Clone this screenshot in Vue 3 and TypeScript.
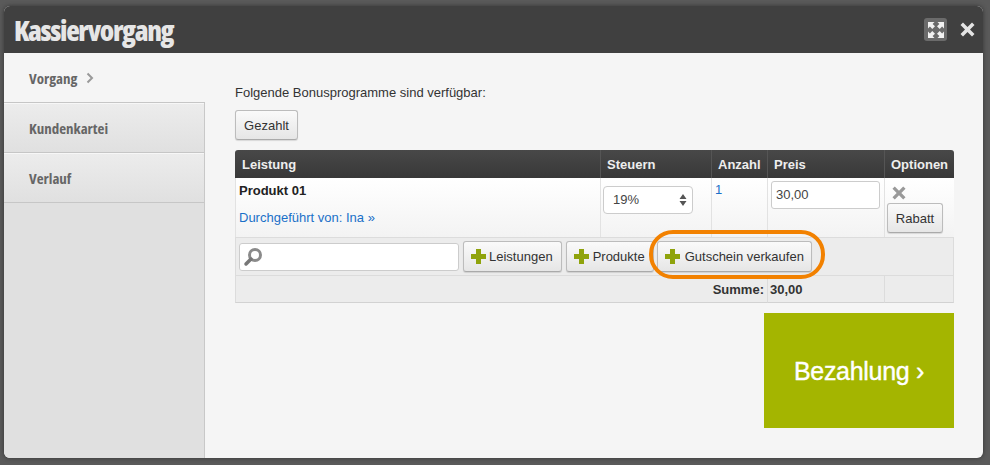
<script setup lang="ts">
const navItems = [
  { label: 'Vorgang', active: true },
  { label: 'Kundenkartei', active: false },
  { label: 'Verlauf', active: false },
]
const addButtons = ['Leistungen', 'Produkte']
</script>

<template>
  <div class="page">
    <div class="window">
      <header class="head">
        <h1>Kassiervorgang</h1>
        <div class="head-icons">
          <span class="expand">
            <svg width="22" height="22" viewBox="0 0 22 22">
              <g fill="#f2f2f2">
                <path d="M3 3h6.5L7.6 4.9 10 7.3 7.3 10 4.9 7.6 3 9.5z" />
                <path d="M19 3h-6.5l1.9 1.9L12 7.3 14.7 10l2.4-2.4L19 9.5z" />
                <path d="M3 19h6.5l-1.9-1.9L10 14.7 7.3 12l-2.4 2.4L3 12.5z" />
                <path d="M19 19h-6.5l1.9-1.9-2.4-2.4 2.7-2.7 2.4 2.4 1.9-1.9z" />
              </g>
            </svg>
          </span>
          <svg class="close" width="15" height="15" viewBox="0 0 15 15">
            <path d="M3 .5 7.5 5 12 .5 14.500 3 10 7.500l4.500 4.500L12 14.500 7.500 10 3 14.500.5 12 5 7.500.5 3z" fill="#e4e4e4" />
          </svg>
        </div>
      </header>
      <div class="body">
        <nav class="side">
          <a v-for="item in navItems" :key="item.label" class="nav" :class="{ active: item.active }">
            {{ item.label }}
            <svg v-if="item.active" class="chev" width="8" height="12" viewBox="0 0 8 12">
              <path d="M1.500 1.500 6 6l-4.500 4.500" fill="none" stroke="#999" stroke-width="2" />
            </svg>
          </a>
        </nav>
        <main class="main">
          <p class="intro">Folgende Bonusprogramme sind verfügbar:</p>
          <button class="btn paid">Gezahlt</button>
          <table class="tbl">
            <colgroup>
              <col class="c1" /><col class="c2" /><col class="c3" /><col class="c4" /><col class="c5" />
            </colgroup>
            <thead>
              <tr>
                <th>Leistung</th><th>Steuern</th><th>Anzahl</th><th>Preis</th><th>Optionen</th>
              </tr>
            </thead>
            <tbody>
              <tr class="item">
                <td class="prod">
                  <strong>Produkt 01</strong>
                  <a class="link">Durchgeführt von: Ina »</a>
                </td>
                <td>
                  <div class="select">
                    <span>19%</span>
                    <svg width="8" height="14" viewBox="0 0 8 14">
                      <path d="M4 1 7.500 6h-7zM4 13 .5 8h7z" fill="#555" />
                    </svg>
                  </div>
                </td>
                <td class="qty"><a class="link">1</a></td>
                <td><div class="price">30,00</div></td>
                <td class="opts">
                  <svg class="del" width="14" height="14" viewBox="0 0 15 15">
                    <path d="M3 .5 7.500 5 12 .5 14.500 3 10 7.500l4.500 4.500L12 14.500 7.500 10 3 14.500.5 12 5 7.500.5 3z" fill="#999" />
                  </svg>
                  <button class="btn rabatt">Rabatt</button>
                </td>
              </tr>
              <tr class="tools">
                <td colspan="5">
                  <div class="toolbar">
                    <div class="search">
                      <svg width="20" height="20" viewBox="0 0 20 20">
                        <circle cx="12" cy="8" r="5.500" fill="none" stroke="#8a8a8a" stroke-width="3" />
                        <path d="M8 12 3 17" stroke="#777" stroke-width="3.500" stroke-linecap="round" />
                      </svg>
                    </div>
                    <button v-for="label in addButtons" :key="label" class="btn add">
                      <svg width="15" height="15" viewBox="0 0 15 15">
                        <path d="M5 0h5v5h5v5h-5v5H5v-5H0V5h5z" fill="#8fa30c" />
                      </svg>
                      {{ label }}
                    </button>
                    <span class="ring-wrap">
                      <button class="btn add voucher">
                        <svg width="15" height="15" viewBox="0 0 15 15">
                          <path d="M5 0h5v5h5v5h-5v5H5v-5H0V5h5z" fill="#8fa30c" />
                        </svg>
                        Gutschein verkaufen
                      </button>
                      <span class="ring"></span>
                    </span>
                  </div>
                </td>
              </tr>
              <tr class="sum">
                <td colspan="3" class="sum-label">Summe:</td>
                <td class="sum-val">30,00</td>
                <td></td>
              </tr>
            </tbody>
          </table>
          <button class="pay">Bezahlung ›</button>
        </main>
      </div>
    </div>
  </div>
</template>

<style scoped>
.page {
  width: 990px;
  height: 465px;
  box-sizing: border-box;
  padding: 6px 7px 7px 4px;
  background: #5a5a5a;
  overflow: hidden;
  font-family: "Liberation Sans", Arial, sans-serif;
  font-size: 13px;
  color: #333;
}
.window {
  height: 100%;
  display: flex;
  flex-direction: column;
  border-radius: 6px;
  overflow: hidden;
  background: #f5f5f5;
  box-shadow: 0 0 4px #333;
}
.head {
  height: 47px;
  flex: none;
  background: #404040;
  display: flex;
  align-items: center;
  justify-content: space-between;
  padding: 0 8px 0 10px;
}
h1 {
  margin: 0;
  font-family: "Open Sans", sans-serif;
  font-size: 28px;
  font-weight: 800;
  font-stretch: 75%;
  color: #e6e6e6;
  letter-spacing: -1.35px;
  line-height: 1;
}
.head-icons {
  display: flex;
  align-items: center;
  gap: 13px;
}
.expand {
  width: 23px;
  height: 23px;
  border-radius: 3px;
  background: #6b6b6b;
  display: flex;
  align-items: center;
  justify-content: center;
}
.body {
  flex: 1;
  display: flex;
  min-height: 0;
}
.side {
  width: 200px;
  flex: none;
  background: #e0e0e0;
  border-right: 1px solid #c8c8c8;
}
.nav {
  display: flex;
  align-items: center;
  gap: 9px;
  box-sizing: border-box;
  height: 50px;
  padding: 0 0 1px 25px;
  font-family: "Open Sans", sans-serif;
  font-size: 15px;
  font-weight: 700;
  font-stretch: 75%;
  color: #666;
  background: linear-gradient(#ececec, #e0e0e0);
  border-bottom: 1px solid #c6c6c6;
  border-top: 1px solid #f7f7f7;
}
.nav.active {
  background: #f5f5f5;
  margin-right: -1px;
  border-top: 0;
  padding: 1px 0 0 25px;
}
.main {
  flex: 1;
  padding: 32px 29px 0 30px;
  min-width: 0;
  display: flex;
  flex-direction: column;
  align-items: flex-start;
}
.intro {
  margin: 0 0 10px;
  font-size: 13px;
  line-height: 15px;
  color: #333;
}
.btn {
  box-sizing: border-box;
  font-family: inherit;
  font-size: 13px;
  color: #333;
  border: 1px solid #bcbcbc;
  border-bottom-color: #aaa;
  border-radius: 3px;
  background: linear-gradient(#fafafa, #e6e6e6);
  box-shadow: 0 1px 1px rgba(0, 0, 0, 0.12);
  padding: 0;
}
.paid {
  width: 63px;
  height: 30px;
  margin-bottom: 10px;
}
.tbl {
  width: 719px;
  table-layout: fixed;
  border-collapse: separate;
  border-spacing: 0;
  font-size: 13px;
}
.c1 { width: 365px; }
.c2 { width: 111px; }
.c3 { width: 56px; }
.c4 { width: 117px; }
.c5 { width: 70px; }
th {
  height: 28px;
  padding: 0 0 0 6px;
  text-align: left;
  font-weight: 700;
  color: #eee;
  background: linear-gradient(#484848, #383838);
  border-left: 1px solid #555;
  box-sizing: border-box;
  white-space: nowrap;
}
th:first-child {
  border-left: 0;
  padding-left: 7px;
  border-top-left-radius: 3px;
}
th:last-child {
  border-top-right-radius: 3px;
}
.item td {
  height: 59px;
  box-sizing: border-box;
  vertical-align: top;
  background: linear-gradient(#fff, #f3f3f3);
  border-left: 1px solid #e2e2e2;
  padding: 0;
}
.prod {
  padding: 5px 0 0 3px !important;
}
.prod strong {
  display: block;
  color: #222;
  line-height: 15px;
  margin-bottom: 12px;
}
.link {
  color: #1a70c8;
  line-height: 15px;
}
.select {
  box-sizing: border-box;
  width: 90px;
  height: 28px;
  margin: 8px 0 0 2px;
  padding: 0 5px 1px 9px;
  display: flex;
  align-items: center;
  justify-content: space-between;
  background: #fff;
  border: 1px solid #ccc;
  border-radius: 4px;
  color: #444;
}
.qty {
  padding: 4px 0 0 3px !important;
}
.price {
  box-sizing: border-box;
  width: 109px;
  height: 28px;
  margin: 3px 0 0 3px;
  padding: 0 4px;
  line-height: 26px;
  background: #fff;
  border: 1px solid #ccc;
  border-radius: 3px;
  color: #444;
}
.opts {
  padding: 0 0 0 2px !important;
}
.del {
  display: block;
  margin: 8px 0 3px 5px;
}
.rabatt {
  display: block;
  width: 56px;
  height: 30px;
}
.tools td {
  height: 39px;
  box-sizing: border-box;
  background: #ececec;
  border: 1px solid #dcdcdc;
  padding: 0;
}
.toolbar {
  display: flex;
  align-items: center;
  gap: 4px;
  padding-left: 3px;
}
.search {
  box-sizing: border-box;
  width: 220px;
  height: 28px;
  background: #fff;
  border: 1px solid #ccc;
  border-radius: 3px;
  display: flex;
  align-items: center;
  padding-left: 3px;
}
.add {
  height: 31px;
  display: inline-flex;
  align-items: center;
  gap: 3px;
  padding: 0 8px 0 7px;
  white-space: nowrap;
}
.add + .add {
  gap: 4px;
}
.voucher {
  gap: 5px;
  padding-right: 7px;
}
.ring-wrap {
  position: relative;
  display: inline-flex;
  margin-left: -1px;
}
.ring {
  position: absolute;
  left: -8px;
  top: -11px;
  width: 176px;
  height: 49px;
  box-sizing: border-box;
  border: 4px solid #f28100;
  border-radius: 24px;
}
.sum td {
  height: 27px;
  box-sizing: border-box;
  background: #ececec;
  border-bottom: 1px solid #d2d2d2;
  border-left: 1px solid #dcdcdc;
  font-weight: 700;
  color: #333;
  padding: 0;
}
.sum td:last-child {
  border-right: 1px solid #dcdcdc;
}
.sum-label {
  text-align: right;
  padding-right: 3px !important;
}
.sum-val {
  padding-left: 2px !important;
}
.pay {
  margin: 10px 0 0 529px;
  width: 190px;
  height: 115px;
  padding: 2px 0 0;
  border: 0;
  background: #a4b500;
  color: #fff;
  font-family: inherit;
  font-size: 25px;
  letter-spacing: -0.3px;
  -webkit-text-stroke: 0.4px #fff;
}
</style>

<style>
body { margin: 0; background: #5a5a5a; }
</style>
